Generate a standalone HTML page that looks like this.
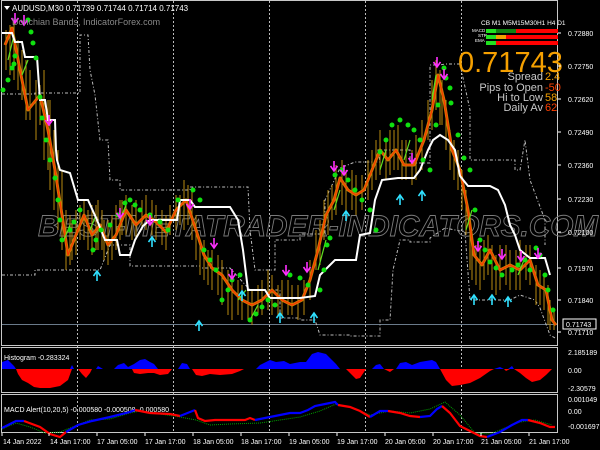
<!DOCTYPE html>
<html><head><meta charset="utf-8"><style>
html,body{margin:0;padding:0;background:#000;width:600px;height:450px;overflow:hidden}
svg{display:block}
text{font-family:"Liberation Sans",sans-serif}
</style></head><body>
<svg width="600" height="450" viewBox="0 0 600 450" xmlns="http://www.w3.org/2000/svg">
<defs>
<g id="ad"><path d="M0,-9V0" stroke="#ff30ff" stroke-width="1.6"/><path d="M-3.5,-4 L0,1 L3.5,-4" fill="none" stroke="#ff30ff" stroke-width="1.6"/></g>
<g id="au"><path d="M0,9V0" stroke="#30e0ff" stroke-width="1.6"/><path d="M-3.5,4 L0,-1 L3.5,4" fill="none" stroke="#30e0ff" stroke-width="1.6"/></g>
</defs>
<rect width="600" height="450" fill="#000"/>
<g fill="none" stroke="#c8c8c8" stroke-width="1">
<rect x="1.5" y="0.5" width="556" height="345"/>
<rect x="1.5" y="347.5" width="556" height="45"/>
<rect x="1.5" y="394.5" width="556" height="38"/>
</g>
<g stroke="#bbb" stroke-width="1" stroke-dasharray="2,2">
<line x1="77.5" y1="1" x2="77.5" y2="432"/><line x1="173.5" y1="1" x2="173.5" y2="432"/>
<line x1="269.5" y1="1" x2="269.5" y2="432"/><line x1="365.5" y1="1" x2="365.5" y2="432"/>
<line x1="461.5" y1="1" x2="461.5" y2="432"/>
</g>
<line x1="2" y1="324.5" x2="557" y2="324.5" stroke="#6a7a8a" stroke-width="1"/>
<text x="38" y="236" font-size="30" font-style="italic" font-weight="bold" fill="none" stroke="#7a7a7a" stroke-width="0.9" textLength="560" lengthAdjust="spacingAndGlyphs">BEST-METATRADER-INDICATORS.COM</text>
<g fill="none" stroke="#bbb" stroke-width="1" stroke-dasharray="3,2,1,2">
<polyline points="2,94 35,94 35,93 80,93 80,35 88,35 90,70 95,95 100,140 108,140 110,180 120,180 120,190 190,190 190,187 248,187 250,230 255,270 275,270 275,240 300,240 300,234 325,234 325,200 340,168 355,162 375,162 380,162 378,150 410,150 410,163 430,163 430,65 440,65 445,64 460,64 470,110 470,160 515,160 515,170 520,170 525,140 530,180 545,220 545,240 545,245"/>
<polyline points="2,275 35,275 35,270 95,270 100,270 110,245 130,245 130,266 200,266 200,268 230,268 250,290 280,290 280,318 300,318 300,320 315,320 320,335 350,335 350,336 380,336 380,320 390,320 393,270 400,240 410,240 410,242 430,242 430,238 445,228 455,230 465,232 470,300 510,300 520,295 535,300 540,308 550,335 555,338"/>
</g>
<g fill="none" stroke-linejoin="round">
<g stroke="#b88a10" stroke-width="1">
<path d="M6,30v40M10,25v50M14,20v60M18,40v50M22,50v50M26,60v60M30,70v50M36,80v60M40,85v40M44,70v90M48,100v70M50,100v90M54,130v80M58,150v80M62,170v80M66,210v60M70,215v50M72,220v40M76,210v45M80,205v35M84,200v40M88,210v40M92,205v50M96,205v45M98,200v50M102,210v40M104,220v40M108,220v45M112,215v45M116,205v45M120,200v40M122,200v35M126,195v40M132,205v35M136,200v40M142,200v30M146,195v35M152,200v35M156,205v35M162,210v35M166,215v35M170,205v30M176,195v35M180,195v30M184,180v50M188,185v40M192,190v50M196,215v45M200,240v35M204,240v40M208,250v35M212,250v40M218,255v40M222,260v45M228,270v45M232,270v50M238,280v35M242,285v35M248,290v30M252,290v35M258,285v30M262,280v35M268,270v40M272,275v40M278,285v30M282,280v35M288,280v35M292,285v30M298,285v35M304,280v35M310,260v40M316,230v40M320,220v45M324,200v40M328,190v45M332,185v35M336,165v50M342,160v45M346,170v40M352,170v40M356,175v40M362,175v35M368,160v40M372,150v40M376,140v40M380,130v45M386,140v40M390,130v45M394,130v40M398,125v45M402,140v40M406,140v40M412,150v35M416,135v45M422,120v50M428,100v40M432,80v50M436,60v50M440,70v55M442,80v45M446,100v50M450,130v40M454,140v40M458,150v40M462,170v40M466,190v45M470,220v50M472,240v40M476,245v40M480,245v45M484,240v40M488,235v40M492,245v45M496,255v40M500,245v45M506,245v40M510,250v40M516,250v40M520,240v50M526,245v35M530,245v40M536,265v40M540,270v35M544,275v35M548,285v40M550,300v30M554,310v20"/>
</g>
<polyline stroke="#d07a00" stroke-width="3" points="5,45 12,28 20,70 28,110 40,95 48,130 55,170 62,215 68,255 76,235 84,215 92,235 100,225 108,245 116,235 126,210 136,225 146,215 156,222 166,232 176,210 186,200 196,230 204,255 212,268 222,275 232,290 242,300 252,305 262,300 272,290 282,300 292,305 302,300 310,280 318,250 326,215 334,200 340,178 348,190 356,195 364,190 372,170 380,150 388,160 396,150 404,165 414,165 424,140 432,110 438,75 444,100 452,150 460,170 468,210 474,255 482,265 490,250 500,270 510,265 520,270 530,260 538,285 546,290 552,320 556,325"/>
<polyline stroke="#ff3000" stroke-width="1" points="5,45 12,28 20,70 28,110 40,95 48,130 55,170 62,215 68,255 76,235 84,215 92,235 100,225 108,245 116,235 126,210 136,225 146,215 156,222 166,232 176,210 186,200 196,230 204,255 212,268 222,275 232,290 242,300 252,305 262,300 272,290 282,300 292,305 302,300 310,280 318,250 326,215 334,200 340,178 348,190 356,195 364,190 372,170 380,150 388,160 396,150 404,165 414,165 424,140 432,110 438,75 444,100 452,150 460,170 468,210 474,255 482,265 490,250 500,270 510,265 520,270 530,260 538,285 546,290 552,320 556,325"/>
<g stroke="#60e020" stroke-width="1.2">
<path d="M8,60 14,35M22,75 28,60M64,240 70,225M90,230 96,215M120,220 126,205M238,300 246,290M250,320 258,305M318,270 326,240M334,210 340,190M380,170 386,150M404,160 410,140M432,100 436,75M466,230 472,210M518,275 524,260"/>
</g>
</g>
<polyline fill="none" stroke="#fff" stroke-width="2" points="2,33 12,33 15,42 22,42 25,57 37,57 40,100 45,100 48,120 55,120 56,150 57,160 60,170 70,173 78,200 88,200 97,220 105,240 117,240 120,255 130,255 135,240 143,226 150,220 177,220 180,200 190,200 195,207 230,207 238,220 243,250 248,290 265,290 270,298 300,298 315,296 320,275 330,265 335,260 356,260 360,235 370,233 375,200 382,180 398,178 414,178 420,170 428,150 433,140 440,135 448,140 455,150 460,176 468,186 490,186 498,190 505,205 510,225 515,235 520,250 530,258 545,258 550,275"/>
<g fill="#10e010">
<circle cx="3" cy="90" r="2.5"/><circle cx="8" cy="80" r="2.5"/><circle cx="12" cy="68" r="2.5"/><circle cx="15" cy="56" r="2.5"/><circle cx="28" cy="20" r="2.5"/><circle cx="31" cy="32" r="2.5"/><circle cx="33" cy="43" r="2.5"/><circle cx="36" cy="58" r="2.5"/><circle cx="14" cy="64" r="2.5"/><circle cx="40" cy="97" r="2.5"/><circle cx="42" cy="118" r="2.5"/><circle cx="46" cy="140" r="2.5"/><circle cx="50" cy="160" r="2.5"/><circle cx="55" cy="178" r="2.5"/><circle cx="58" cy="200" r="2.5"/><circle cx="60" cy="220" r="2.5"/><circle cx="62" cy="240" r="2.5"/><circle cx="70" cy="230" r="2.5"/><circle cx="74" cy="222" r="2.5"/><circle cx="80" cy="210" r="2.5"/><circle cx="93" cy="250" r="2.5"/><circle cx="96" cy="240" r="2.5"/><circle cx="101" cy="230" r="2.5"/><circle cx="110" cy="225" r="2.5"/><circle cx="118" cy="215" r="2.5"/><circle cx="125" cy="203" r="2.5"/><circle cx="130" cy="200" r="2.5"/><circle cx="135" cy="205" r="2.5"/><circle cx="140" cy="210" r="2.5"/><circle cx="150" cy="215" r="2.5"/><circle cx="160" cy="222" r="2.5"/><circle cx="168" cy="230" r="2.5"/><circle cx="178" cy="200" r="2.5"/><circle cx="193" cy="190" r="2.5"/><circle cx="200" cy="200" r="2.5"/><circle cx="204" cy="250" r="2.5"/><circle cx="210" cy="260" r="2.5"/><circle cx="216" cy="270" r="2.5"/><circle cx="222" cy="300" r="2.5"/><circle cx="228" cy="290" r="2.5"/><circle cx="232" cy="280" r="2.5"/><circle cx="240" cy="275" r="2.5"/><circle cx="250" cy="320" r="2.5"/><circle cx="256" cy="314" r="2.5"/><circle cx="262" cy="307" r="2.5"/><circle cx="268" cy="300" r="2.5"/><circle cx="275" cy="305" r="2.5"/><circle cx="290" cy="275" r="2.5"/><circle cx="300" cy="278" r="2.5"/><circle cx="308" cy="285" r="2.5"/><circle cx="320" cy="290" r="2.5"/><circle cx="324" cy="270" r="2.5"/><circle cx="327" cy="245" r="2.5"/><circle cx="330" cy="238" r="2.5"/><circle cx="335" cy="175" r="2.5"/><circle cx="342" cy="170" r="2.5"/><circle cx="348" cy="180" r="2.5"/><circle cx="355" cy="190" r="2.5"/><circle cx="362" cy="200" r="2.5"/><circle cx="370" cy="210" r="2.5"/><circle cx="376" cy="230" r="2.5"/><circle cx="380" cy="152" r="2.5"/><circle cx="386" cy="140" r="2.5"/><circle cx="392" cy="125" r="2.5"/><circle cx="400" cy="120" r="2.5"/><circle cx="408" cy="125" r="2.5"/><circle cx="414" cy="130" r="2.5"/><circle cx="420" cy="140" r="2.5"/><circle cx="423" cy="160" r="2.5"/><circle cx="430" cy="170" r="2.5"/><circle cx="436" cy="125" r="2.5"/><circle cx="438" cy="105" r="2.5"/><circle cx="444" cy="68" r="2.5"/><circle cx="446" cy="78" r="2.5"/><circle cx="450" cy="88" r="2.5"/><circle cx="451" cy="103" r="2.5"/><circle cx="458" cy="135" r="2.5"/><circle cx="464" cy="158" r="2.5"/><circle cx="470" cy="170" r="2.5"/><circle cx="475" cy="210" r="2.5"/><circle cx="480" cy="240" r="2.5"/><circle cx="485" cy="250" r="2.5"/><circle cx="490" cy="262" r="2.5"/><circle cx="496" cy="268" r="2.5"/><circle cx="502" cy="275" r="2.5"/><circle cx="512" cy="270" r="2.5"/><circle cx="518" cy="265" r="2.5"/><circle cx="525" cy="260" r="2.5"/><circle cx="530" cy="270" r="2.5"/><circle cx="536" cy="248" r="2.5"/><circle cx="540" cy="255" r="2.5"/><circle cx="545" cy="275" r="2.5"/><circle cx="548" cy="290" r="2.5"/><circle cx="553" cy="310" r="2.5"/>
</g>
<!-- arrows -->
<use href="#ad" x="15" y="22"/><use href="#ad" x="24" y="24"/><use href="#ad" x="49" y="124"/><use href="#ad" x="214" y="247"/><use href="#ad" x="232" y="278"/><use href="#ad" x="286" y="274"/><use href="#ad" x="307" y="271"/><use href="#ad" x="334" y="170"/><use href="#ad" x="344" y="174"/><use href="#ad" x="412" y="162"/><use href="#ad" x="437" y="66"/><use href="#ad" x="444" y="78"/><use href="#ad" x="478" y="250"/><use href="#ad" x="502" y="258"/><use href="#ad" x="521" y="260"/><use href="#ad" x="538" y="257"/><use href="#ad" x="120" y="217"/><use href="#ad" x="150" y="224"/><use href="#ad" x="190" y="208"/>
<use href="#au" x="97" y="272"/><use href="#au" x="199" y="322"/><use href="#au" x="242" y="292"/><use href="#au" x="280" y="314"/><use href="#au" x="314" y="314"/><use href="#au" x="346" y="212"/><use href="#au" x="400" y="196"/><use href="#au" x="422" y="192"/><use href="#au" x="474" y="296"/><use href="#au" x="492" y="296"/><use href="#au" x="508" y="298"/><use href="#au" x="152" y="238"/>
<path d="M4,6 h6 l-3,4z" fill="#fff"/>
<text x="12" y="11" font-size="8" fill="#fff">AUDUSD,M30  0.71739  0.71744  0.71714  0.71743</text>
<text x="12" y="25" font-size="9" fill="#888">Donchian Bands, IndicatorForex.com</text>
<g font-size="6.5" fill="#fff">
<text x="481" y="25">CB  M1  M5M15M30H1  H4  D1</text>
<text x="472" y="32" font-size="4.5">MACD</text><text x="478" y="37" font-size="4.5">STR</text><text x="475" y="42" font-size="4.5">EMA</text>
</g>
<rect x="486" y="29" width="10" height="4" fill="#20e020"/><rect x="496" y="29" width="20" height="4" fill="#108010"/><rect x="516" y="29" width="42" height="4" fill="#ff0000"/>
<rect x="486" y="35" width="10" height="4" fill="#20e020"/><rect x="496" y="35" width="10" height="4" fill="#f0a000"/><rect x="506" y="35" width="52" height="4" fill="#ff0000"/>
<rect x="486" y="41" width="10" height="4" fill="#20e020"/><rect x="496" y="41" width="62" height="4" fill="#ff0000"/>
<text x="458" y="72" font-size="29" fill="#f5a000">0.71743</text>
<g font-size="11" fill="#c8c8c8" text-anchor="end">
<text x="543" y="80">Spread</text><text x="543" y="91">Pips to Open</text><text x="543" y="101">Hi to Low</text><text x="543" y="111">Daily Av</text>
</g>
<g font-size="11" text-anchor="start">
<text x="545" y="80" fill="#f5a000">2.4</text><text x="545" y="91" fill="#ff4000">-50</text><text x="545" y="101" fill="#f5a000">58</text><text x="545" y="111" fill="#ff4000">62</text>
</g>
<g font-size="7" fill="#fff">
<text x="568" y="36">0.72880</text><text x="568" y="69">0.72750</text><text x="568" y="102">0.72620</text><text x="568" y="135">0.72490</text><text x="568" y="168">0.72360</text><text x="568" y="202">0.72230</text><text x="568" y="235">0.72100</text><text x="568" y="271">0.71970</text><text x="568" y="303">0.71840</text><text x="568" y="335">0.71710</text>
<text x="568" y="355">2.185189</text><text x="568" y="373">0.00</text><text x="568" y="391">-2.30579</text>
<text x="568" y="402">0.001049</text><text x="568" y="414">0.00</text><text x="568" y="429">-0.001697</text>
</g>
<g stroke="#fff"><path d="M558,33h3M558,66h3M558,99h3M558,132h3M558,165h3M558,199h3M558,232h3M558,268h3M558,300h3M558,332h3"/></g>
<rect x="563" y="319" width="33" height="10" fill="#000" stroke="#fff"/>
<text x="566" y="327" font-size="7" fill="#fff">0.71743</text>
<text x="4" y="360" font-size="7" fill="#fff">Histogram -0.283324</text>
<path fill="#0000ff" d="M2,369 L2,362 8,360 14,366 16,369Z M70,369 72,365 74,369Z M96,369 98,366 103,369Z M114,369 118,365 124,363 128,367 134,364 140,360 145,359 150,362 154,364 158,369Z M178,369 182,363 187,364 190,369Z M256,369 260,365 266,362 270,360 276,362 284,361 290,364 300,362 306,362 312,354 318,352 326,354 332,360 336,364 340,369Z M372,369 376,365 380,364 384,369Z M396,369 400,363 406,362 412,365 420,362 426,361 432,360 436,362 440,369Z M494,369 500,367 504,369Z M508,369 512,366 514,369Z"/>
<path fill="#ff0000" d="M16,369 L18,374 22,380 28,383 34,387 40,388 50,388 60,386 68,380 72,369Z M78,369 82,374 86,378 90,373 92,369Z M132,369 134,373 140,374 148,373 154,373 160,375 168,374 172,369Z M192,369 196,375 202,376 210,374 220,375 232,374 240,371 244,369Z M346,369 350,373 356,379 360,378 366,369Z M384,369 390,372 394,369Z M440,369 446,380 452,386 460,385 470,383 480,378 490,371 494,369Z M504,369 506,371 510,369Z M514,369 520,373 526,378 532,382 540,380 546,375 552,369Z"/>
<text x="4" y="412" font-size="7" fill="#fff">MACD Alert(10,20,5) -0.000580 -0.000508 -0.000580</text>
<polyline fill="none" stroke="#00a000" stroke-width="1" stroke-dasharray="1,1" points="2,429 16,423 30,427 45,433 60,432 75,426 90,420 110,419 130,413 140,411 160,414 180,417 196,420 210,425 230,424 260,423 280,420 300,417 320,411 336,404 350,407 370,415 390,411 410,413 430,409 445,402 460,415 475,433 490,434 500,430 520,422 535,420 552,425"/>
<g fill="none" stroke-width="2.2">
<polyline stroke="#0000ff" points="2,428 16,421 24,421"/>
<polyline stroke="#ff0000" points="24,421 40,427 50,434 60,437 66,432"/>
<polyline stroke="#0000ff" points="66,432 78,425 92,421 110,417 130,412 135,410"/>
<polyline stroke="#ff0000" points="135,410 150,413 170,414 180,416"/>
<polyline stroke="#0000ff" points="180,416 195,410"/>
<polyline stroke="#ff0000" points="195,410 198,418 205,421 215,420 225,420 235,420 245,420 250,418 255,420"/>
<polyline stroke="#0000ff" points="255,420 270,417 290,413 300,413 308,410 315,406 325,404 335,402 338,405"/>
<polyline stroke="#ff0000" points="338,405 350,407 360,411 370,417"/>
<polyline stroke="#0000ff" points="370,417 380,411 388,411"/>
<polyline stroke="#ff0000" points="388,411 400,413 410,416 420,417"/>
<polyline stroke="#0000ff" points="420,417 430,416 437,409 442,406"/>
<polyline stroke="#ff0000" points="442,406 450,413 460,426 470,431 480,436 487,437"/>
<polyline stroke="#0000ff" points="487,437 500,432 512,425 522,420 528,420"/>
<polyline stroke="#ff0000" points="528,420 540,423 550,427 555,427"/>
</g>
<g stroke="#fff"><path d="M2,433v3M49,433v3M97,433v3M145,433v3M193,433v3M241,433v3M289,433v3M337,433v3M385,433v3M433,433v3M481,433v3M529,433v3"/></g>
<g font-size="7" fill="#fff">
<text x="3" y="444">14 Jan 2022</text><text x="50" y="444">14 Jan 17:00</text><text x="97" y="444">17 Jan 05:00</text><text x="145" y="444">17 Jan 17:00</text><text x="193" y="444">18 Jan 05:00</text><text x="241" y="444">18 Jan 17:00</text><text x="289" y="444">19 Jan 05:00</text><text x="337" y="444">19 Jan 17:00</text><text x="385" y="444">20 Jan 05:00</text><text x="433" y="444">20 Jan 17:00</text><text x="481" y="444">21 Jan 05:00</text><text x="529" y="444">21 Jan 17:00</text>
</g>
</svg>
</body></html>
